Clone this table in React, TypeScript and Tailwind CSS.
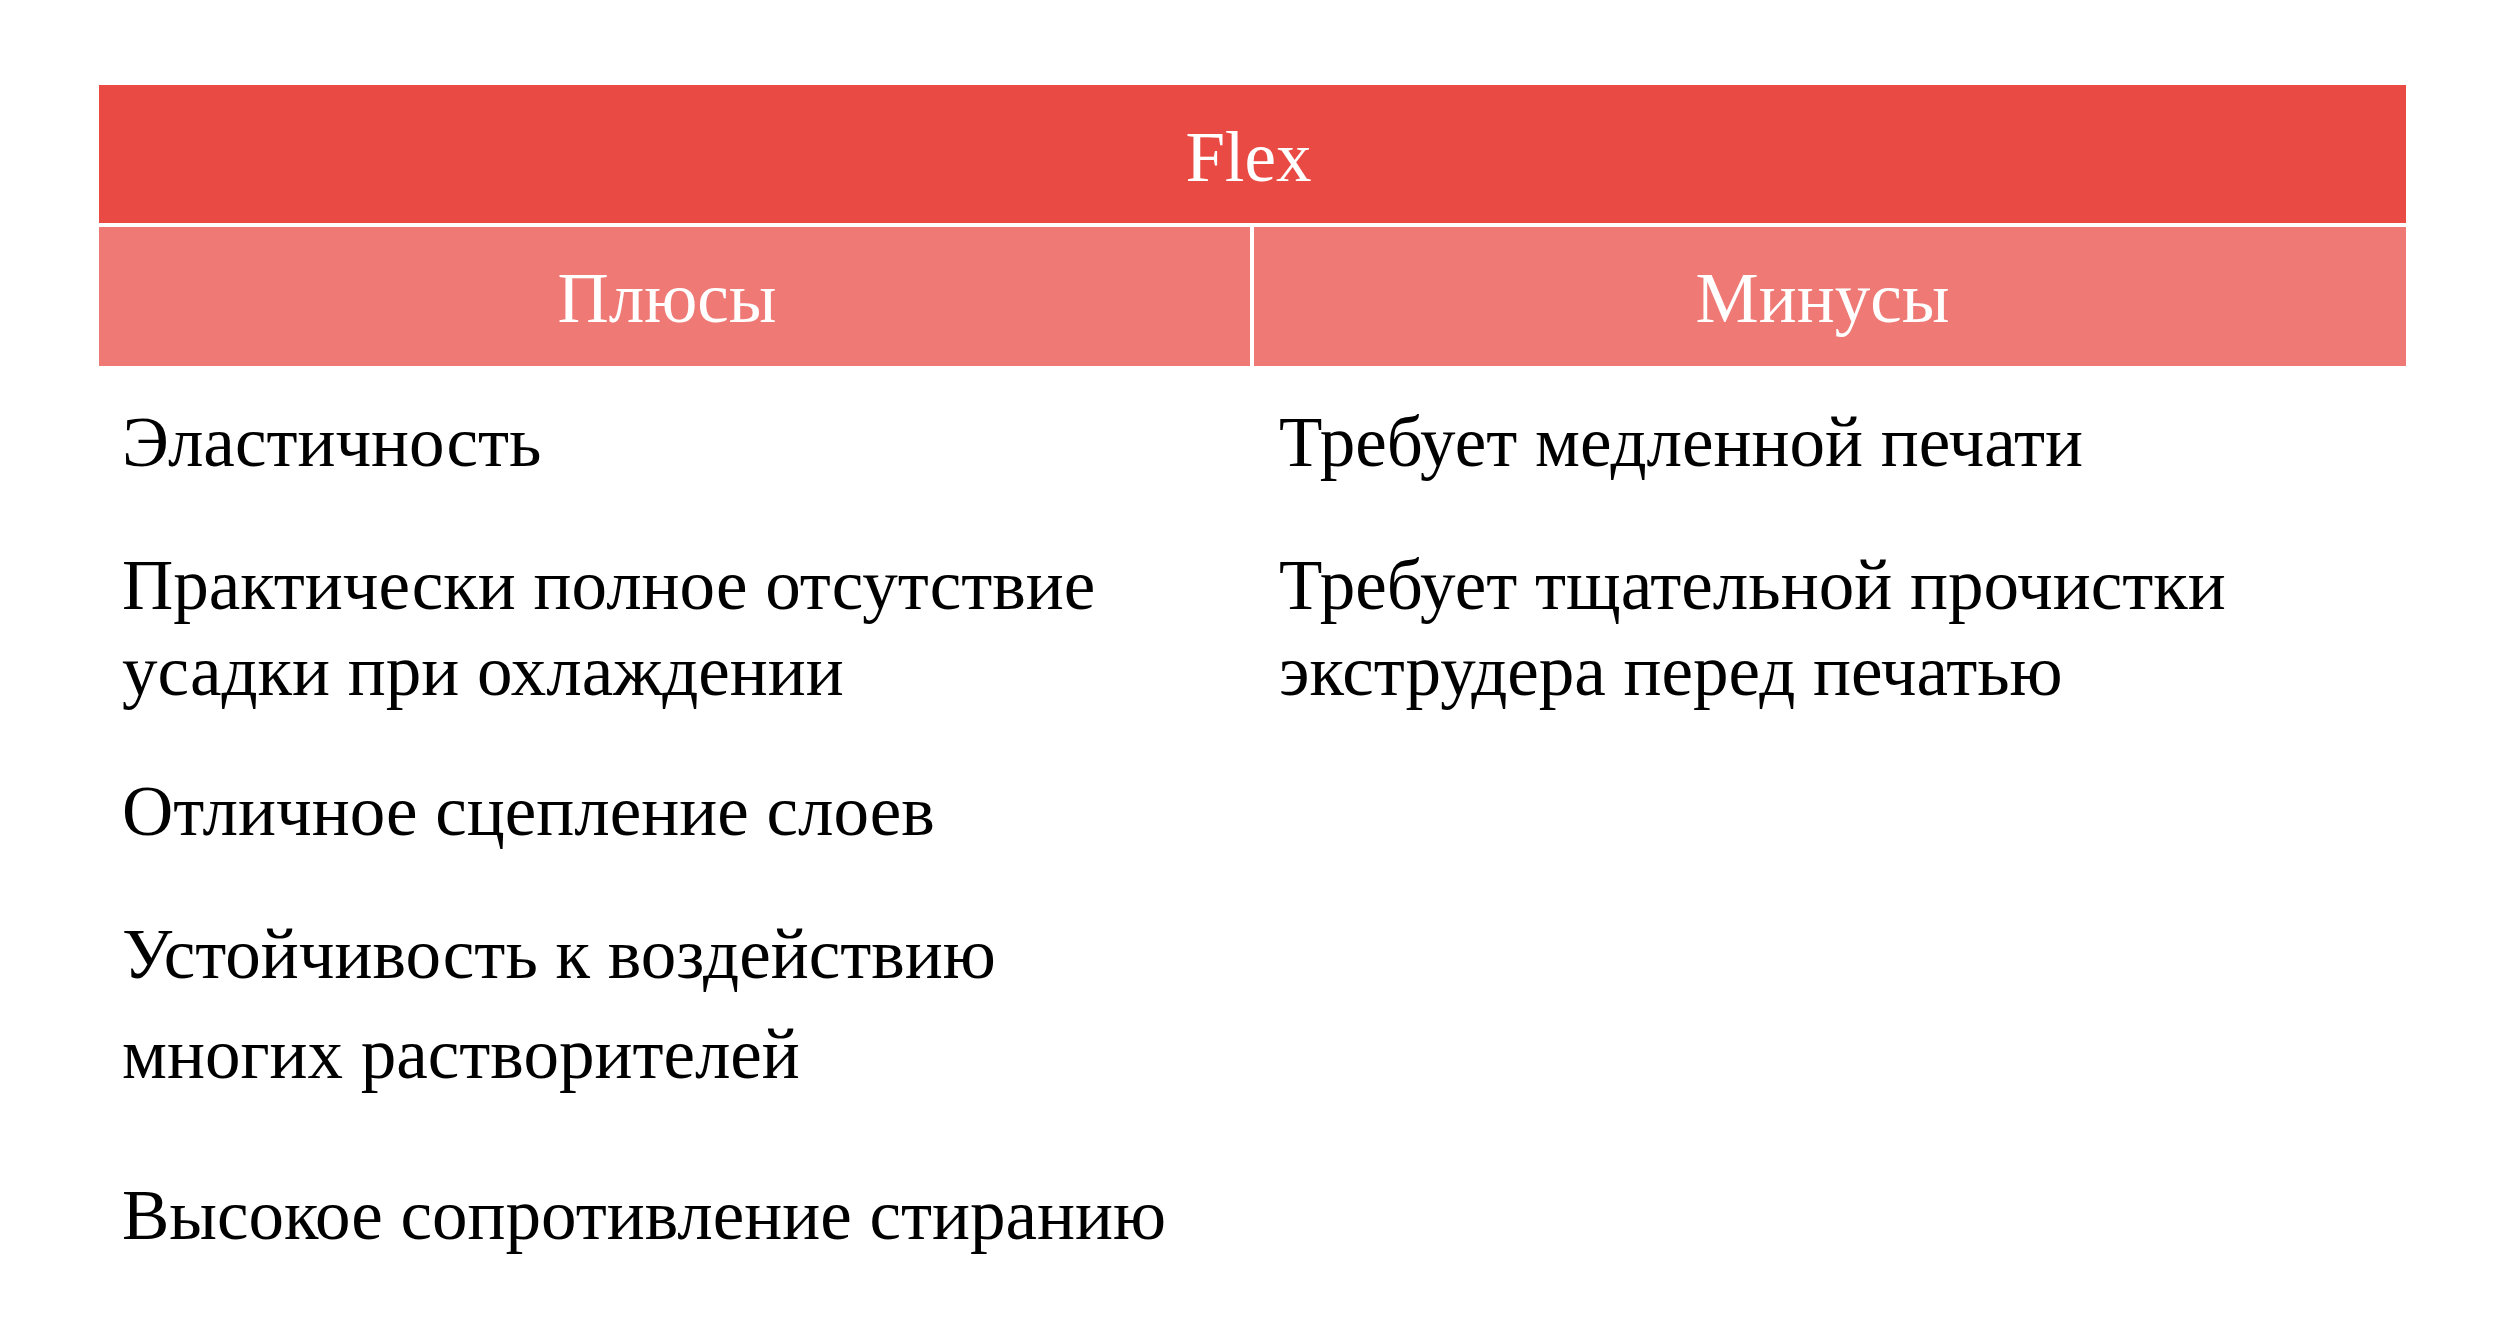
import React from "react";

const serif = { fontFamily: '"Liberation Serif", "Times New Roman", serif' };

export default function App() {
  return (
    <div className="w-[2500px] h-[1341px] bg-white overflow-hidden" style={serif}>
      <div className="pt-[85px] pl-[99px] w-[2406px]">
        <div className="w-[2307px]">
          <div className="h-[138px] bg-[#e94a43] flex items-center justify-center pt-[6px] pr-[8px] text-white text-[71px] leading-none">
            Flex
          </div>
          <div className="grid grid-cols-[1151px_1152px] gap-x-[4px] mt-[4px]">
            <div className="h-[139px] bg-[#ef7975] flex items-center justify-center pt-[4px] pr-[15px] text-white text-[71px] leading-none">
              Плюсы
            </div>
            <div className="h-[139px] bg-[#ef7975] flex items-center justify-center pt-[4px] pr-[15px] text-white text-[71px] leading-none">
              Минусы
            </div>
            <div className="pl-[23px] pt-[33px] text-black text-[71px] leading-[86px]">
              <p>Эластичность</p>
              <p className="mt-[57px]">Практически полное отсутствие<br />усадки при охлаждении</p>
              <p className="mt-[54px]">Отличное сцепление слоев</p>
              <p className="mt-[50px] leading-[100px]">Устойчивость к воздействию<br />многих растворителей</p>
              <p className="mt-[68px]">Высокое сопротивление стиранию</p>
            </div>
            <div className="pl-[25px] pt-[33px] text-black text-[71px] leading-[86px]">
              <p>Требует медленной печати</p>
              <p className="mt-[57px]">Требует тщательной прочистки<br />экструдера перед печатью</p>
            </div>
          </div>
        </div>
      </div>
    </div>
  );
}
